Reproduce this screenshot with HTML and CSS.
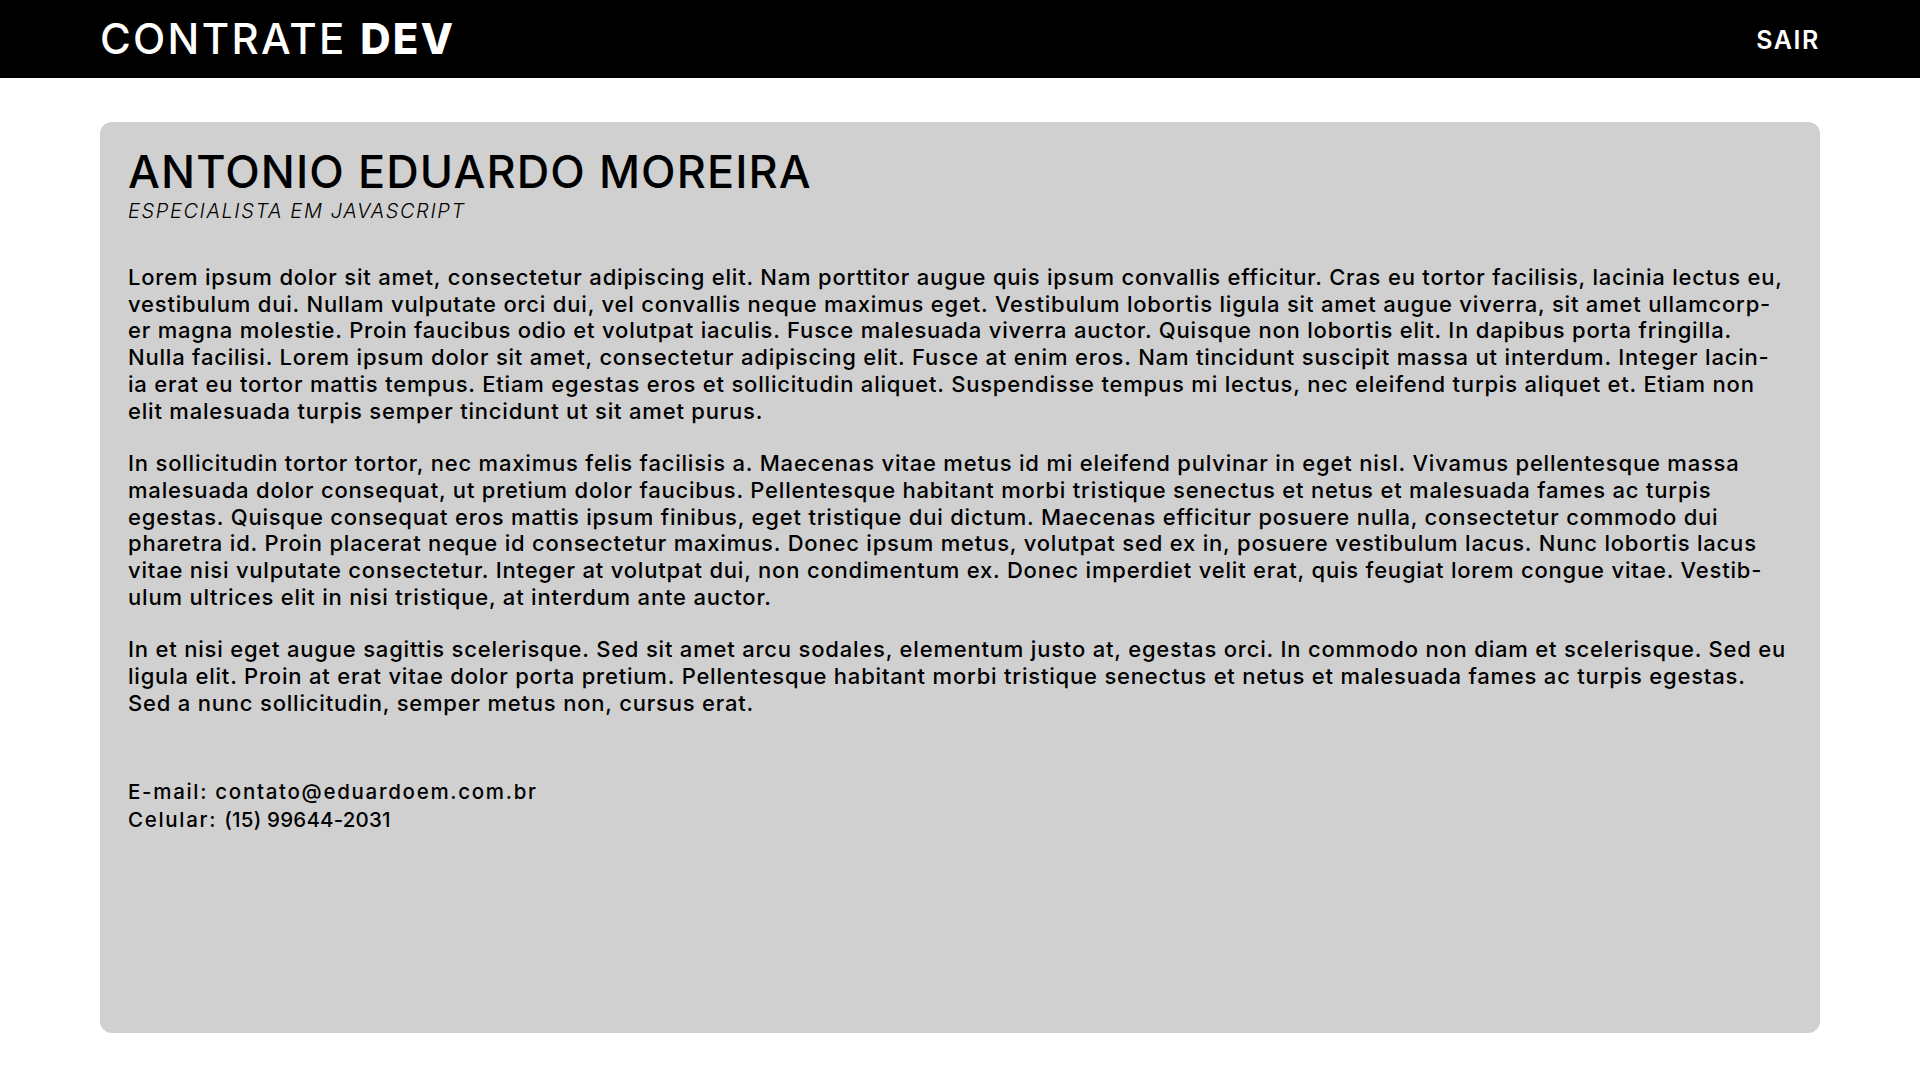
FILE: index.html
```html
<!DOCTYPE html>
<html lang="pt-BR">
<head>
<meta charset="utf-8">
<title>Contrate Dev</title>
<link rel="stylesheet" href="styles.css">
</head>
<body>
<header class="topbar">
  <div class="topbar-inner">
    <div class="logo">CONTRATE <strong>DEV</strong></div>
    <a class="logout" href="#">SAIR</a>
  </div>
</header>
<main class="page">
  <section class="card">
    <h1 class="name">ANTONIO EDUARDO MOREIRA</h1>
    <p class="role">ESPECIALISTA EM JAVASCRIPT</p>
    <div class="bio">
      <p>Lorem ipsum dolor sit amet, consectetur adipiscing elit. Nam porttitor augue quis ipsum convallis efficitur. Cras eu tortor facilisis, lacinia lectus eu,<br>vestibulum dui. Nullam vulputate orci dui, vel convallis neque maximus eget. Vestibulum lobortis ligula sit amet augue viverra, sit amet ullamcorp-<br>er magna molestie. Proin faucibus odio et volutpat iaculis. Fusce malesuada viverra auctor. Quisque non lobortis elit. In dapibus porta fringilla.<br>Nulla facilisi. Lorem ipsum dolor sit amet, consectetur adipiscing elit. Fusce at enim eros. Nam tincidunt suscipit massa ut interdum. Integer lacin-<br>ia erat eu tortor mattis tempus. Etiam egestas eros et sollicitudin aliquet. Suspendisse tempus mi lectus, nec eleifend turpis aliquet et. Etiam non<br>elit malesuada turpis semper tincidunt ut sit amet purus.</p>
      <p>In sollicitudin tortor tortor, nec maximus felis facilisis a. Maecenas vitae metus id mi eleifend pulvinar in eget nisl. Vivamus pellentesque massa<br>malesuada dolor consequat, ut pretium dolor faucibus. Pellentesque habitant morbi tristique senectus et netus et malesuada fames ac turpis<br>egestas. Quisque consequat eros mattis ipsum finibus, eget tristique dui dictum. Maecenas efficitur posuere nulla, consectetur commodo dui<br>pharetra id. Proin placerat neque id consectetur maximus. Donec ipsum metus, volutpat sed ex in, posuere vestibulum lacus. Nunc lobortis lacus<br>vitae nisi vulputate consectetur. Integer at volutpat dui, non condimentum ex. Donec imperdiet velit erat, quis feugiat lorem congue vitae. Vestib-<br>ulum ultrices elit in nisi tristique, at interdum ante auctor.</p>
      <p>In et nisi eget augue sagittis scelerisque. Sed sit amet arcu sodales, elementum justo at, egestas orci. In commodo non diam et scelerisque. Sed eu<br>ligula elit. Proin at erat vitae dolor porta pretium. Pellentesque habitant morbi tristique senectus et netus et malesuada fames ac turpis egestas.<br>Sed a nunc sollicitudin, semper metus non, cursus erat.</p>
    </div>
    <div class="contact">
      <p>E-mail: contato@eduardoem.com.br</p>
      <p>Celular: <span class="phone">(15) 99644-2031</span></p>
    </div>
  </section>
</main>
</body>
</html>
```
FILE: styles.css
```css
* { box-sizing: border-box; }
html, body { margin: 0; padding: 0; }
body {
  font-family: Inter, "Open Sans", sans-serif;
  background: #ffffff;
  color: #000000;
  height: 100vh;
  display: flex;
  flex-direction: column;
}
.topbar {
  background: #000000;
  height: 78px;
  flex: 0 0 auto;
}
.topbar-inner {
  width: 1720px;
  margin: 0 auto;
  height: 100%;
  display: flex;
  align-items: center;
  justify-content: space-between;
  padding: 0 0 1px 0;
}
.logo {
  color: #ffffff;
  font-size: 42px;
  font-weight: 500;
  letter-spacing: 2.3px;
  line-height: 1;
}
.logo strong { font-weight: 800; }
.logout {
  color: #ffffff;
  text-decoration: none;
  font-size: 25px;
  font-weight: 600;
  letter-spacing: 1.6px;
  line-height: 1;
  padding-top: 3px;
}
.page {
  flex: 1 1 auto;
  display: flex;
  padding: 44px 0 47px;
}
.card {
  width: 1720px;
  margin: 0 auto;
  background: #d0d0d0;
  border-radius: 12px;
  padding: 23px 28px 0 28px;
}
.name {
  margin: 0;
  font-size: 45px;
  line-height: 54px;
  font-weight: 500;
  letter-spacing: 1.1px;
}
.role {
  margin: 1px 0 0;
  font-size: 20px;
  line-height: 22px;
  font-style: italic;
  font-weight: 300;
  letter-spacing: 1.6px;
}
.bio {
  margin-top: 42px;
  display: flex;
  flex-direction: column;
  gap: 26px;
}
.bio p {
  margin: 0;
  font-size: 22px;
  line-height: 26.7px;
  font-weight: 500;
  letter-spacing: 0.8px;
  white-space: nowrap;
}
.contact {
  margin-top: 61px;
}
.contact p {
  margin: 0;
  font-size: 20.5px;
  line-height: 28.5px;
  font-weight: 500;
  letter-spacing: 1.7px;
}
.contact .phone { letter-spacing: 0.2px; }
```
